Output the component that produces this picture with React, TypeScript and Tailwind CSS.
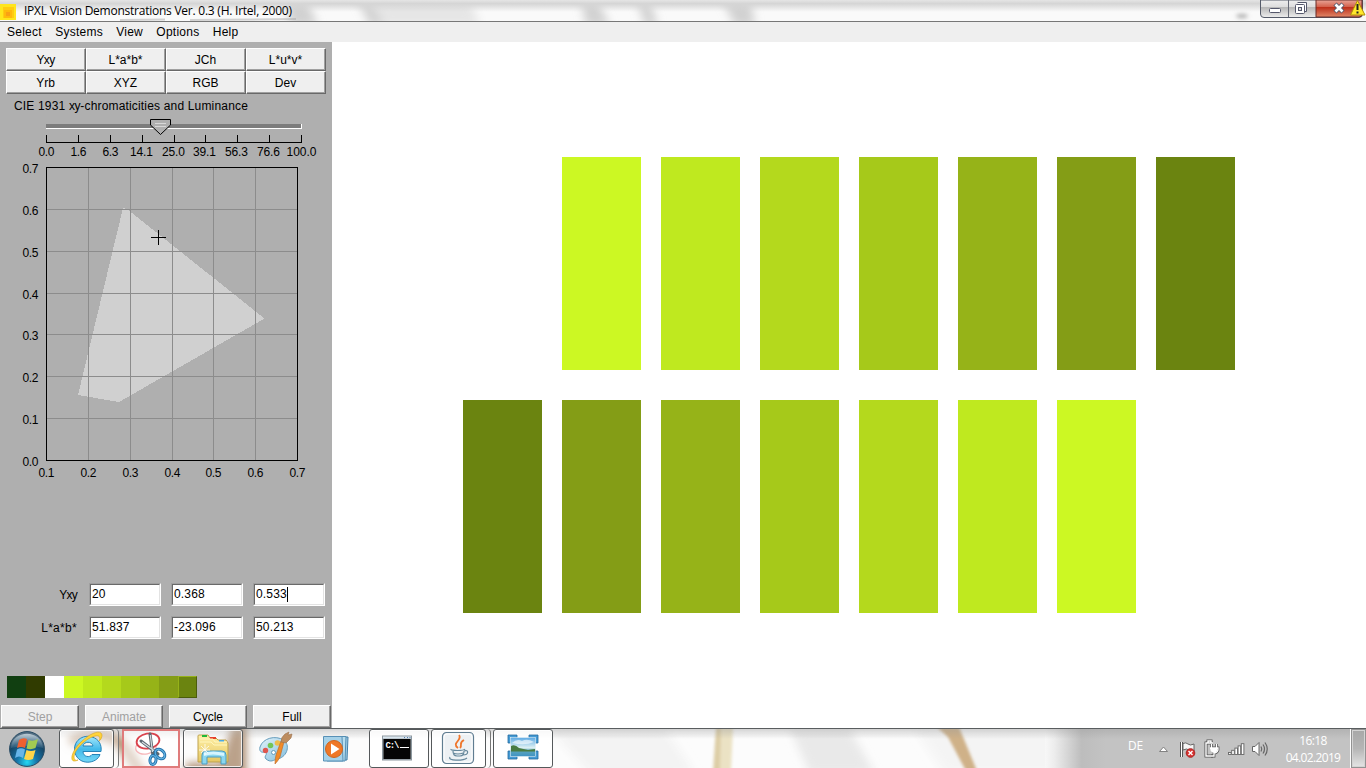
import React from "react";

const systems = ["Yxy", "L*a*b*", "JCh", "L*u*v*", "Yrb", "XYZ", "RGB", "Dev"];
const ramp = ["bg-[#ccf823]", "bg-[#bfe91f]", "bg-[#b4d91d]", "bg-[#a6c91a]", "bg-[#96b318]", "bg-[#849d16]", "bg-[#6b8410]"];
const ticks: [number, string][] = [
  [46, "0.0"], [78, "1.6"], [110, "6.3"], [142, "14.1"], [174, "25.0"],
  [205, "39.1"], [237, "56.3"], [269, "76.6"], [301, "100.0"],
];
const gridX = [46, 88, 130, 172, 213, 255, 297];
const gridY = [167, 209, 251, 293, 334, 376, 418, 460];

function Slider() {
  return (
    <svg width="332" height="47" viewBox="0 114 332 47" className="block" shapeRendering="crispEdges">
      <rect x="46" y="124" width="255" height="4" fill="#7c7c7c" />
      <path d="M46 128.5H301.5V124" stroke="#fff" fill="none" />
      <path d="M150.5 119.5H170.5V125L160.5 134.5L150.5 125Z" fill="#afafaf" stroke="#000" shapeRendering="auto" />
      <path d="M155 123.5H166M155 126.5H166" stroke="#d8d8d8" />
      <path d="M46 142.5H302" stroke="#000" />
      {ticks.map(([x, t], i) => (
        <g key={t}>
          <path d={`M${x + 0.5} 135V142`} stroke="#000" />
          <text x={x + (i > 2 && i < 8 ? -0.5 : 0.5)} y="156" textAnchor="middle" textLength={i === 8 ? 30 : i > 2 ? 23 : 16} fontSize="12">{t}</text>
        </g>
      ))}
    </svg>
  );
}

function Chart() {
  return (
    <svg width="332" height="322" viewBox="0 161 332 322" className="block" shapeRendering="crispEdges">
      <polygon points="123,208 127,209 264.5,318.5 119,402 78,395" fill="#d0d0d0" />
      {gridX.slice(1, -1).map((x) => <path key={x} d={`M${x + 0.5} 168V460`} stroke="#8c8c8c" />)}
      {gridY.slice(1, -1).map((y) => <path key={y} d={`M47 ${y + 0.5}H297`} stroke="#8c8c8c" />)}
      <rect x="46.5" y="167.5" width="251" height="293" fill="none" stroke="#000" />
      <path d="M151 237.5H166M158.5 230V245" stroke="#000" />
      {gridX.map((x, i) => (
        <text key={x} x={x + 0.5} y="477" textAnchor="middle" textLength="16" fontSize="12">{`0.${i + 1}`}</text>
      ))}
      {gridY.map((y, i) => (
        <text key={y} x="22.5" y={y + 6} textLength="16" fontSize="12">{`0.${7 - i}`}</text>
      ))}
    </svg>
  );
}

function Row({ label, values, caret }: { label: string; values: string[]; caret?: boolean }) {
  return (
    <div className="flex h-[23px] gap-[10px]">
      <div className={`w-[67px] text-right leading-[25px] ${caret ? "tracking-[-0.75px]" : "tracking-[0.3px]"}`}>{label}</div>
      <div className="ml-[2px] flex gap-[10px]">
        {values.map((v, i) => (
          <div key={v} className="flex h-[23px] w-[72px] border border-t-[#a0a0a0] border-l-[#a0a0a0] border-r-white border-b-white">
            <div className="flex flex-1 items-start border border-t-[#696969] border-l-[#696969] border-r-[#e3e3e3] border-b-[#e3e3e3] bg-white pl-px leading-[18px] tracking-[0.15px]">
              {v}
              {caret && i === 2 && <span className="mt-[2px] h-[15px] w-px bg-black" />}
            </div>
          </div>
        ))}
      </div>
    </div>
  );
}

function Swatches({ colors }: { colors: string[] }) {
  return (
    <div className="flex gap-5">
      {colors.map((c) => <div key={c} className={`h-[213px] w-[79px] ${c}`} />)}
    </div>
  );
}

const taskButton = "flex h-[39px] items-center justify-center rounded-[3px] border border-[#55595b] shadow-[inset_0_0_0_1px_rgba(255,255,255,0.8)]";

function StartOrb() {
  return (
    <svg width="38" height="38" viewBox="0 0 38 38">
      <defs>
        <radialGradient id="orb" cx="50%" cy="88%" r="75%">
          <stop offset="0" stopColor="#25d8f3" /><stop offset=".38" stopColor="#1674a8" /><stop offset=".8" stopColor="#164767" /><stop offset="1" stopColor="#536f84" />
        </radialGradient>
        <linearGradient id="shine" x2="0" y2="1"><stop stopColor="#d0dce3" stopOpacity=".85" /><stop offset="1" stopColor="#779fb8" stopOpacity=".2" /></linearGradient>
      </defs>
      <circle cx="19" cy="19" r="17.4" fill="url(#orb)" stroke="#254962" />
      <path d="M3 18C4-1 34-1 35 18Q20 14 3 18" fill="url(#shine)" />
      <path d="M11 10Q15 7 19 9L17 18Q13 16 9 18Z" fill="#ef6030" />
      <path d="M20.5 10Q25 12 30 9L27.5 18Q23 20 18.5 18.5Z" fill="#a2cb52" />
      <path d="M9 19.5Q13 17 17 19.5L15 28Q11 25 7 28Z" fill="#67b5e9" />
      <path d="M18.5 20Q23 22 27.5 20L25 29Q20 31 16 29Z" fill="#ffd549" />
    </svg>
  );
}

function IEIcon() {
  return (
    <svg width="34" height="36" viewBox="0 0 34 36" className="-mt-px">
      <defs><linearGradient id="ie" x2="0" y2="1"><stop stopColor="#a4e8fc" /><stop offset=".5" stopColor="#42b9ea" /><stop offset="1" stopColor="#74d8f6" /></linearGradient></defs>
      <path d="M31 21.5H13C13 27 20 28 22 24.5H30C27 34 9 36 5 23C2 11 13 4 22 7C29 9 32 15 31 21.5ZM13 16H23C22 11 14 11 13 16Z" fill="url(#ie)" stroke="#2683b7" />
      <path d="M8 30C-2 35 1 21 11 12C20 3 31-1 32 5C32 7 31 10 29 11C31 7 29 5 25 6C16 8 4 20 4 27C4 30 6 31 8 30Z" fill="#ffd339" stroke="#d7a21b" strokeWidth=".6" />
    </svg>
  );
}

function SnipIcon() {
  return (
    <svg width="34" height="36" viewBox="0 0 34 36" fill="none" className="-mt-px">
      <ellipse cx="12" cy="17" rx="10.5" ry="7" fill="#fff" fillOpacity=".6" stroke="#f6b5b8" strokeWidth="1.3" transform="rotate(-12 12 17)" />
      <ellipse cx="14" cy="11" rx="11.5" ry="7.5" fill="#fff" stroke="#d9434d" strokeWidth="1.8" transform="rotate(-10 14 11)" />
      <path d="M7 11L24 24M16 4L19 26" stroke="#5d6871" strokeWidth="3" strokeLinecap="round" />
      <path d="M8 12L22 22M16.3 5L18.5 22" stroke="#d5dce1" strokeWidth="1.2" />
      <ellipse cx="26" cy="24" rx="4" ry="5.5" stroke="#2373ad" strokeWidth="3" transform="rotate(-45 26 24)" />
      <ellipse cx="19" cy="30" rx="3" ry="4.4" stroke="#2373ad" strokeWidth="3" transform="rotate(8 19 30)" />
      <ellipse cx="26" cy="24" rx="4" ry="5.5" stroke="#69b8e6" strokeWidth="1" transform="rotate(-45 26 24)" />
      <ellipse cx="19" cy="30" rx="3" ry="4.4" stroke="#69b8e6" strokeWidth="1" transform="rotate(8 19 30)" />
    </svg>
  );
}

function FolderIcon() {
  return (
    <svg width="36" height="34" viewBox="0 0 36 34">
      <defs><linearGradient id="folder" x2="0" y2="1"><stop stopColor="#fff0a8" /><stop offset="1" stopColor="#e5c762" /></linearGradient></defs>
      <path d="M3 30V4Q3 3 4 3H13L15 6H21L23 8H31L33 11V30Z" fill="url(#folder)" stroke="#bda14e" />
      <path d="M7 3H12V5H7Z" fill="#20b938" /><path d="M15 5H21V7H15Z" fill="#e5402b" /><path d="M24 8H29V10H24Z" fill="#4aa9e1" />
      <path d="M5 7H18L20 10H32M5 10H16L19 13H32" stroke="#fff6bd" fill="none" />
      <path d="M7 32V23Q7 19 11 19H27Q31 19 31 23V32H26V25H12V32Z" fill="#8bd7ef" stroke="#4a9bc1" />
      <path d="M9 21Q18 18 29 21V24Q17 21 9 24Z" fill="#d6f5ff" /><path d="M10 12V23M4 18H15M6 14L13 21M14 14L6 21" stroke="#fff" strokeWidth=".8" />
    </svg>
  );
}

function PaintIcon() {
  return (
    <svg width="36" height="36" viewBox="0 0 36 36" className="-mt-1">
      <defs><linearGradient id="palette" x2="1" y2="1"><stop stopColor="#e2f3fc" /><stop offset="1" stopColor="#83bedd" /></linearGradient></defs>
      <path d="M3 18C6 9 18 6 27 11C33 16 31 27 21 30C16 31 14 34 9 30C6 27 12 25 8 23C4 24 2 22 3 18Z" fill="url(#palette)" stroke="#659bba" />
      <circle cx="8.5" cy="21.5" r="2.7" fill="#df564e" /><circle cx="13.5" cy="16.5" r="2.8" fill="#73c557" /><circle cx="20.5" cy="14" r="2.8" fill="#eebd4e" /><circle cx="16.5" cy="23.5" r="2" fill="#fff" stroke="#659bba" />
      <path d="M27 13L23 28Q21 32 18 35Q18 30 19 26L24 12Z" fill="#f18a28" stroke="#b86724" strokeWidth=".6" /><path d="M24 13Q24 8 28 5L32 3L31 6L35 5L34 9L29 14Z" fill="#bd8d60" stroke="#9b714e" strokeWidth=".6" />
    </svg>
  );
}

function MediaIcon() {
  return (
    <svg width="32" height="32" viewBox="0 0 32 32" className="-mt-px">
      <path d="M9 5H27L26 28H9Z" fill="#9fcbe4" stroke="#427fa7" /><path d="M6 4.5H25L24 29H6Z" fill="#b7ddee" stroke="#538eb3" />
      <path d="M2.5 4.5H21L22 29H2.5Z" fill="#a5d1e8" stroke="#5790b6" />
      <circle cx="13" cy="17" r="8.5" fill="#ef7726" stroke="#cf651e" /><path d="M10 11.5L18.5 17L10 22.5Z" fill="white" />
    </svg>
  );
}

function ConsoleIcon() {
  return (
    <svg width="32" height="28" viewBox="0 0 32 28" className="-mt-px -ml-1">
      <rect x="1.5" y="2" width="29" height="24" fill="#a1a8ad" stroke="#8d989f" />
      <path d="M2 3.5H30" stroke="#d9e6ef" strokeWidth="2" /><path d="M23 3.5H24M26 3.5H27M28.5 3.5H29.5" stroke="#507aaf" />
      <rect x="2.5" y="5" width="27" height="20" fill="#050505" />
      <text x="4.5" y="14" className="[font-family:'Liberation_Mono',monospace]" fontSize="9" fontWeight="bold" textLength="14" fill="white">C:\</text>
      <path d="M19 13.5H28" stroke="white" />
    </svg>
  );
}

function JavaIcon() {
  return (
    <svg width="34" height="34" viewBox="0 0 34 34" fill="none" className="-mt-px -ml-px">
      <rect x="1.5" y="1.5" width="31" height="31" rx="4" fill="#edf1f4" stroke="#607d91" strokeWidth="1.2" />
      <rect x="3" y="3" width="28" height="28" rx="3" stroke="white" />
      <path d="M17 17C10 12 22 9 18 4M19 17C22 14 17 12 23 9" stroke="#ef762c" strokeWidth="1.8" />
      <path d="M10 18C9 20 23 20 24 18M12 20Q12 25 16 25H19Q23 25 23 20M23 20C28 18 28 24 22 24M9 26C6 30 22 30 26 27M12 22Q17 24 22 22" stroke="#65879b" strokeWidth="1.2" />
    </svg>
  );
}

function PictureIcon() {
  return (
    <svg width="32" height="28" viewBox="0 0 32 28" className="-mt-1">
      <defs><linearGradient id="sky" x2="0" y2="1"><stop stopColor="#5ca9e4" /><stop offset=".55" stopColor="#e1f2f3" /><stop offset=".68" stopColor="#5ba6bc" /><stop offset="1" stopColor="#3f92c4" /></linearGradient></defs>
      <path d="M1 2H10V5H5V10H1ZM22 2H31V10H27V5H22ZM31 18V26H22V23H27V18ZM10 26H1V18H5V23H10Z" fill="#459bd5" stroke="#236b9f" strokeWidth=".8" />
      <rect x="3.5" y="4.5" width="25" height="19" fill="url(#sky)" stroke="#e4f1f5" strokeWidth=".6" />
      <path d="M4 13Q8 11 12 15L21 17L28 16V18.5H4Z" fill="#487b43" /><path d="M5 10Q10 5 15 8Q20 5 27 9Q18 13 5 10Z" fill="white" opacity=".6" />
    </svg>
  );
}

function TrayIcons() {
  return (
    <svg width="118" height="24" viewBox="0 0 118 24" fill="none">
      <path d="M10.5 10L14.5 14.5H6.5Z" fill="white" stroke="#777" strokeWidth=".9" />
      <path d="M28.5 5V20" stroke="#565656" strokeWidth="3" /><path d="M28.5 5V20" stroke="white" />
      <path d="M30 6.5Q33 5 35 7T41 7V14Q38 15 36 13T30 13Z" fill="#f6f6f6" stroke="#666" />
      <circle cx="37.5" cy="16" r="4.3" fill="#d73230" stroke="#aa2424" /><path d="M35.5 14L39.5 18M39.5 14L35.5 18" stroke="white" strokeWidth="1.4" />
      <path d="M60 6H53V19H60M55 6V4H58V6" stroke="#555" strokeWidth="3" /><path d="M60 6H53V19H60M55 6V4H58V6" stroke="white" strokeWidth="1.4" />
      <path d="M58.5 7V11M63.5 7V11M57 11H65V13Q64 16 61 16V19H58" stroke="#555" strokeWidth="2.8" /><path d="M58.5 7V11M63.5 7V11M57 11H65V13Q64 16 61 16V19H58" stroke="white" strokeWidth="1.3" />
      <path d="M57 11H65Q64 16 61 16Q57 15 57 11Z" fill="white" />
      {[0, 1, 2, 3, 4].map((n) => <rect key={n} x={75.5 + n * 3.2} y={15.5 - n * 2.2} width="2.6" height={2 + n * 2.2} fill="white" stroke="#666" strokeWidth=".9" />)}
      <path d="M99.5 9.5H102L106 5.5V18.5L102 14.5H99.5Z" fill="white" stroke="#666" />
      <path d="M108 9.5Q109.5 12 108 14.5M110 7.5Q113 12 110 16.5M112 5.5Q116.5 12 112 18.5" stroke="#666" strokeWidth="1.2" />
    </svg>
  );
}

function Taskbar() {
  return (
    <footer className="relative flex h-[40px] overflow-hidden border-t border-[#595d5f] bg-[#fcfcfc]">
      <svg className="absolute inset-0" width="1366" height="40" viewBox="0 0 1366 40">
        <defs>
          <filter id="soft" x="-40%" y="-60%" width="180%" height="220%"><feGaussianBlur stdDeviation="4" /></filter>
          <filter id="stripSoft" x="-40%" width="180%"><feGaussianBlur stdDeviation="1.5" /></filter>
          <linearGradient id="tray" x2="1"><stop stopColor="#f7f7f7" /><stop offset=".03" stopColor="#ededed" /><stop offset=".12" stopColor="#bdbdbd" /><stop offset=".2" stopColor="#c3c3c3" /><stop offset="1" stopColor="#c3c3c3" /></linearGradient>
          <linearGradient id="barShade" x2="0" y2="1"><stop stopColor="#999" stopOpacity=".4" /><stop offset="1" stopColor="#999" stopOpacity="0" /></linearGradient>
        </defs>
        <rect width="59" height="40" fill="#c2c2c2" />
        <g filter="url(#soft)">
          <path d="M70 13Q100-4 122 15L145 50" stroke="#a98360" strokeWidth="11" fill="none" opacity=".9" />
          <path d="M233-5H246V50H205L222 28Z" fill="#9b7553" opacity=".85" />
          <path d="M186 34H215V48H186Z" fill="#9b7553" />
          <path d="M550 0H665L695 45H590Z" fill="#f3f3f3" /><path d="M790 0H850L875 45H810Z" fill="#e9e9e9" />
          <path d="M915 0H1100V45H945Z" fill="#f4f4f4" />
        </g>
        <g filter="url(#stripSoft)"><path d="M716-2H724L723 42H713Z" fill="#ddcea6" /><path d="M721-2H733L731 42H720Z" fill="#ebe2c4" /><path d="M937-2H959L977 42H966L948 8Z" fill="#cfb188" /></g>
        <rect x="1045" width="305" height="40" fill="url(#tray)" />
        <rect x="59" width="1291" height="10" fill="url(#barShade)" />
      </svg>
      <div className="relative flex">
        <div className="flex w-[59px] items-center pl-2"><StartOrb /></div>
        <div className={`${taskButton} w-[55px] bg-white/50`}><IEIcon /></div>
        <div className="mr-[3px] h-[39px] w-[5px] rounded-r border-r border-[#777] bg-white/30" />
        <div className="mr-px flex h-[39px] w-[58px] items-center justify-center border-2 border-[#df7b7b] bg-white/60"><SnipIcon /></div>
        <div className={`${taskButton} ml-[2px] w-[60px] bg-white/20`}><FolderIcon /></div>
        <div className="ml-[14px] flex w-[38px] items-center"><PaintIcon /></div>
        <div className="ml-[26px] flex w-[48px] items-center"><MediaIcon /></div>
        <div className={`${taskButton} w-[60px] bg-white/80`}><ConsoleIcon /></div>
        <div className={`${taskButton} ml-[2px] w-[55px] bg-white/80`}><JavaIcon /></div>
        <div className="h-[39px] w-[5px] rounded-r border-r border-[#777]" />
        <div className={`${taskButton} ml-[2px] w-[60px] bg-white/80`}><PictureIcon /></div>
      </div>
      <div className="relative ml-auto flex text-[12px] text-white [font-family:'Open_Sans',sans-serif]">
        <div className="w-[25px] pt-[8px] leading-[17px] tracking-[-0.3px]">DE</div>
        <div className="flex w-[132px] items-center"><TrayIcons /></div>
        <div className="w-[56px] pt-[3px] text-center leading-[17px] tracking-[-0.65px] whitespace-nowrap"><div>16:18</div><div>04.02.2019</div></div>
      </div>
      <div className="relative ml-[10px] w-[15px] border border-[#929292] bg-gradient-to-b from-[#a8a8a8] via-[#b5b5b5] to-[#e5e5e5] shadow-[inset_0_0_0_1px_#d4d4d4]" />
    </footer>
  );
}

function TitleBar() {
  return (
    <header className="relative flex h-[22px] border-b border-[#777] bg-[#fafafa]">
      <svg className="absolute inset-0" width="1366" height="21" viewBox="0 0 1366 21">
        <defs><filter id="titleBlur" x="-20%" y="-100%" width="140%" height="300%"><feGaussianBlur stdDeviation="5" /></filter><filter id="dotBlur" x="-50%" y="-100%" width="200%" height="300%"><feGaussianBlur stdDeviation="2" /></filter><linearGradient id="titleShade" x2="0" y2="1"><stop stopColor="#e5e5e5" /><stop offset=".3" stopColor="#d5d5d5" /><stop offset="1" stopColor="#d5d5d5" stopOpacity="0" /></linearGradient></defs>
        <g filter="url(#titleBlur)"><path d="M285-5H305L318 26H290ZM355-5H375L390 26H370ZM580-5H595L610 26H586ZM635-5H648L658 26H645ZM720-5H750L755 26H735Z" fill="#bbb" opacity=".65" /><path d="M370 0H470L480 26H385Z" fill="#e6e6e6" /></g>
        <rect width="1366" height="12" fill="url(#titleShade)" />
        <ellipse cx="1242" cy="16" rx="6" ry="2" fill="#aaa" filter="url(#dotBlur)" />
        <path d="M120 20L165 19.5M190 20L296 19" stroke="#aaa" strokeWidth="2" opacity=".5" />
      </svg>
      <div className="relative flex items-center">
        <svg width="16" height="18" viewBox="0 0 16 18"><rect y="2" width="16" height="16" fill="#ffe51d" /><rect x="3" y="5" width="11" height="11" fill="#ffcb12" /><rect x="4" y="8" width="8" height="8" fill="#ffb90c" /><rect x="6" y="10" width="4" height="4" fill="#faa014" /></svg>
        <span className="ml-2 text-[12px] tracking-[-0.24px] [font-family:'Open_Sans',sans-serif]">IPXL Vision Demonstrations Ver. 0.3 (H. Irtel, 2000)</span>
      </div>
      <svg className="relative ml-auto block" width="106" height="20" viewBox="0 0 106 20">
        <defs><linearGradient id="caption" x2="0" y2="1"><stop stopColor="#eee" /><stop offset=".4" stopColor="#ddd" /><stop offset=".43" stopColor="#b7b7b7" /><stop offset="1" stopColor="#eee" /></linearGradient><linearGradient id="close" x2="0" y2="1"><stop stopColor="#e8a598" /><stop offset=".4" stopColor="#d4614c" /><stop offset=".43" stopColor="#bd2f1a" /><stop offset="1" stopColor="#e18768" /></linearGradient></defs>
        <path d="M.5 0V14Q.5 17.5 4 17.5H99Q102.5 17.5 102.5 14V0Z" fill="url(#caption)" stroke="#555b69" />
        <path d="M56 0H102V14Q102 17 99 17H56Z" fill="url(#close)" stroke="#682c29" /><path d="M28.5 0V17" stroke="#656975" />
        <rect x="9.5" y="8.5" width="11" height="4" rx="1" fill="white" stroke="#55586c" />
        <path d="M37.5 2.5H46.5V11.5H44" fill="white" stroke="#55586c" /><rect x="35.5" y="4.5" width="9" height="9" rx="1" fill="white" stroke="#55586c" /><rect x="38.5" y="7.5" width="3" height="3" fill="#ddd" stroke="#55586c" />
        <path d="M75 4L83 12M83 4L75 12" stroke="#55586c" strokeWidth="4.5" /><path d="M75.5 4.5L82.5 11.5M82.5 4.5L75.5 11.5" stroke="white" strokeWidth="2.7" />
        <path d="M97.5 .5L105 15H90.5Z" fill="#ffe82c" stroke="#b18f0b" strokeLinejoin="round" /><path d="M97.5 4V10M97.5 11.5V13.5" stroke="#222" strokeWidth="2" />
      </svg>
    </header>
  );
}

export default function App() {
  return (
    <div className="flex h-[768px] w-[1366px] flex-col overflow-hidden bg-white text-[12px] text-black [font-family:'Liberation_Sans',Arial,sans-serif]">
      <TitleBar />
      <nav className="flex h-5 gap-[13.3px] bg-[#efefef] pl-[7px] leading-[20px] tracking-[0.25px]">
        {["Select", "Systems", "View", "Options", "Help"].map((m) => <span key={m}>{m}</span>)}
      </nav>
      <main className="flex h-[686px]">
        <aside className="flex w-[332px] flex-col bg-[#afafaf] pt-[6px]">
          <div className="ml-[6px] grid w-[320px] grid-cols-4">
            {systems.map((s) => (
              <button key={s} className={`h-[23px] border border-t-white border-l-white border-r-[#696969] border-b-[#696969] bg-[#efefef] pr-px leading-[20px] shadow-[inset_-1px_-1px_0_#a0a0a0] ${s === "Yxy" ? "tracking-[-0.7px]" : ""}`}>{s}</button>
            ))}
          </div>
          <div className="h-[20px] pl-[14px] leading-[25px] tracking-[0.17px]">CIE 1931 <span className="tracking-[-0.3px]">xy</span>-chromaticities and Luminance</div>
          <Slider />
          <Chart />
          <div className="mt-[100px] flex flex-col gap-[10px] pl-[10px]">
            <Row label="Yxy" values={["20", "0.368", "0.533"]} caret />
            <Row label="L*a*b*" values={["51.837", "-23.096", "50.213"]} />
          </div>
          <div className="mt-[37px] ml-[7px] flex h-[22px]">
            {["bg-[#113f11]", "bg-[#303b00]", "bg-white", ...ramp].map((c, i) => (
              <div key={c} className={`w-[19px] ${c} ${i === 9 ? "border border-t-[#96b218] border-l-[#96b218] border-r-[#4b5d0b] border-b-[#4b5d0b]" : ""}`} />
            ))}
          </div>
          <div className="mt-[7px] ml-px flex gap-[6px]">
            {["Step", "Animate", "Cycle", "Full"].map((s, i) => (
              <button key={s} className={`h-[23px] w-[78px] border border-t-white border-l-white border-r-[#696969] border-b-[#696969] bg-[#efefef] leading-[20px] shadow-[inset_-1px_-1px_0_#a0a0a0] ${i < 2 ? "text-[#a0a0a0]" : ""}`}>{s}</button>
            ))}
          </div>
        </aside>
        <section className="flex flex-1 flex-col gap-[30px] pt-[115px]">
          <div className="pl-[230px]"><Swatches colors={ramp} /></div>
          <div className="pl-[131px]"><Swatches colors={[...ramp].reverse()} /></div>
        </section>
      </main>
      <Taskbar />
    </div>
  );
}
